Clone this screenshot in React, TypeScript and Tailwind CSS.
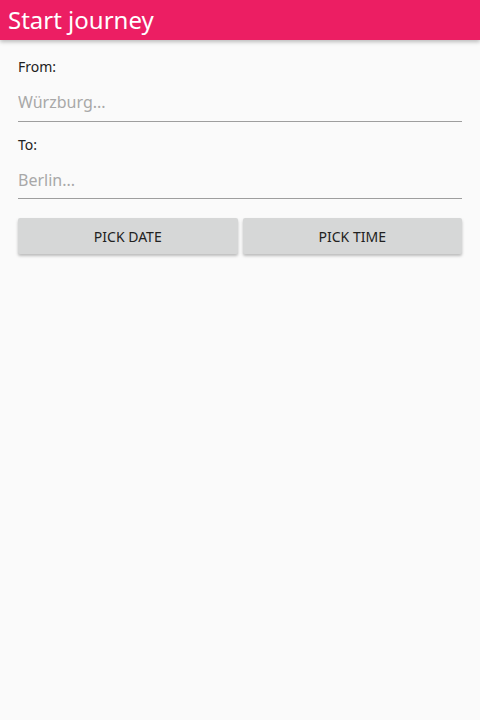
import React from "react";

export default function App() {
  return (
    <div className="min-h-[720px] w-[480px] bg-[#fafafa] text-[#212121]" style={{ fontFamily: '"Noto Sans", sans-serif' }}>
      <div className="h-10 bg-[#ec1e63] flex items-center px-2 shadow-[0_2px_4px_rgba(0,0,0,0.25)] relative z-10">
        <span className="text-white text-[24px] leading-none">Start journey</span>
      </div>
      <div className="px-[18px] pt-[18px]">
        <div className="text-[14px] leading-[18px]">From:</div>
        <div className="mt-[14px] border-b border-[#9e9e9e] pb-[7px]">
          <input className="w-full bg-transparent outline-none text-[16px] leading-[22px] placeholder:text-[#a8a8a8]" placeholder="Würzburg..." />
        </div>
        <div className="mt-[14px] text-[14px] leading-[18px]">To:</div>
        <div className="mt-[14px] border-b border-[#9e9e9e] pb-[6px]">
          <input className="w-full bg-transparent outline-none text-[16px] leading-[22px] placeholder:text-[#a8a8a8]" placeholder="Berlin..." />
        </div>
        <div className="mt-[19px] flex gap-[5px]">
          <button className="flex-1 h-[36px] rounded-[2px] bg-[#d6d7d7] text-[14px] text-[#212121] shadow-[0_2px_3px_rgba(0,0,0,0.25)]">PICK DATE</button>
          <button className="flex-1 h-[36px] rounded-[2px] bg-[#d6d7d7] text-[14px] text-[#212121] shadow-[0_2px_3px_rgba(0,0,0,0.25)]">PICK TIME</button>
        </div>
      </div>
    </div>
  );
}
